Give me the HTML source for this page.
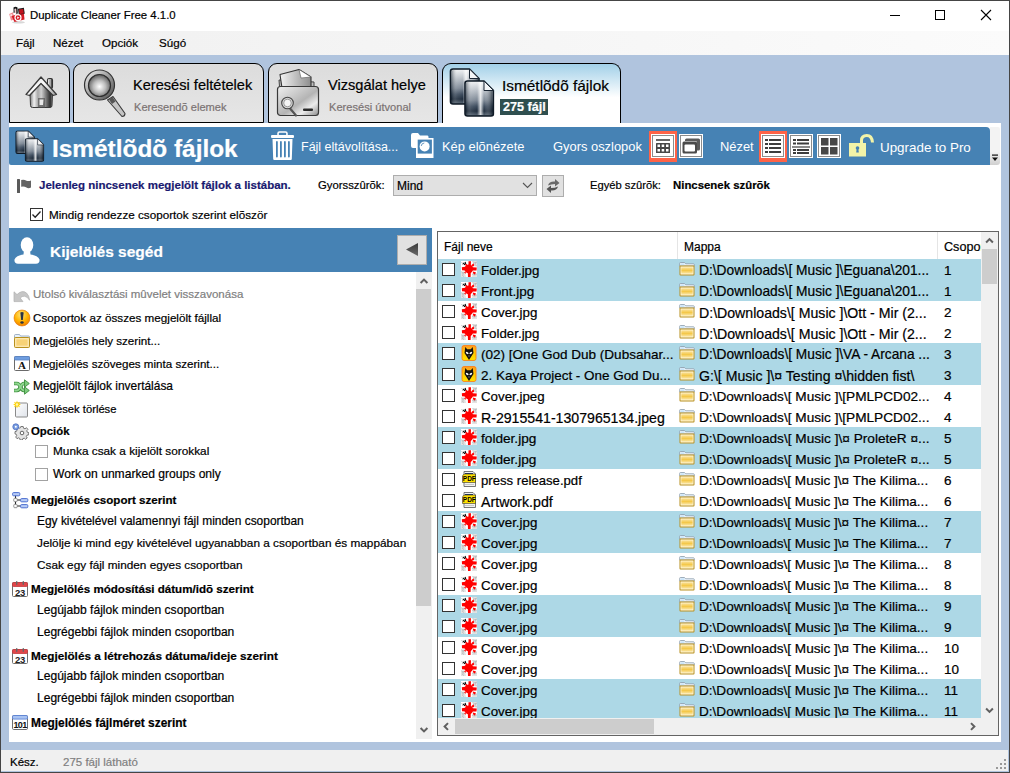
<!DOCTYPE html>
<html><head><meta charset="utf-8">
<style>
*{box-sizing:border-box;margin:0;padding:0}
.t,.li,.row span,.lh{-webkit-text-stroke:0.2px currentColor}
html,body{width:1010px;height:773px;overflow:hidden;background:#b0c4de;font-family:"Liberation Sans",sans-serif;color:#000}
.a{position:absolute}
.t{position:absolute;white-space:nowrap;line-height:1}
#win{position:absolute;left:0;top:0;width:1010px;height:773px;border:1px solid #454545}
#title{position:absolute;left:1px;top:1px;width:1008px;height:30px;background:#fff}
#menu{position:absolute;left:1px;top:31px;width:1008px;height:24px;background:linear-gradient(to right,#f0f0f0,#fbfbfb)}
.tab{position:absolute;top:63px;height:60px;background:linear-gradient(#dcdcdc,#e6e6e6);border:1px solid #000;border-radius:9px 9px 0 0}
#panel{position:absolute;left:9px;top:123px;width:992px;height:619px;background:#fff}
#hdr{position:absolute;left:9px;top:127px;width:981px;height:38px;background:#4682b4;border-radius:1px 4px 0 2px}
#status{position:absolute;left:1px;top:750px;width:1007px;height:21px;background:#f0f0f0}
#lhdr{position:absolute;left:9px;top:228px;width:423px;height:44px;background:#4682b4}
.li{position:absolute;left:33px;font-size:11.7px;white-space:nowrap;line-height:1}
.lb{font-weight:bold;left:31px}
.ls{left:37px}
#list{position:absolute;left:437px;top:231px;width:562px;height:505px;border:1px solid #646464;background:#fff;overflow:hidden}
.row{position:absolute;left:0;width:543px;height:21px;font-size:13.5px;white-space:nowrap}
.row.h{background:#add8e6}
.cb{position:absolute;width:13px;height:13px;border:1px solid #333;background:#fff}
.row .cb{left:4px;top:4px}
.row span{position:absolute;top:5px;line-height:1}
.row .n{left:43px}
.row .p{left:261px}
.row .g{left:506px}
.row i{position:absolute}
.fo{left:241px;top:3px;width:16px;height:14px}
.row svg{position:absolute}
.icr,.icw,.icp{left:23px;top:2px;width:16px;height:16px}
.lh{position:absolute;top:9px;font-size:12px;line-height:1;white-space:nowrap}
.sep{position:absolute;top:0;width:1px;height:27px;background:#e5e5e5}
.sb{position:absolute;background:#f0f0f0}
.th{position:absolute;background:#cdcdcd}
</style></head><body>
<div id="win"></div>
<div id="title"></div>
<svg class="a" style="left:8px;top:6px" width="18" height="18" viewBox="0 0 18 18">
<ellipse cx="10.5" cy="16.3" rx="6.5" ry="1.3" fill="#d8d8d8"/>
<path d="M1.2 8 L5 6.3 L6.5 13.5 L3 14.5 Z" fill="#f08a90"/>
<path d="M2 8.7 L4 8 L4.6 10 L2.6 10.6 Z" fill="#fff" opacity=".8"/>
<path d="M3.5 10 L15.8 6.5 L16.5 13.5 L6.5 16 Z" fill="#d61c26"/>
<path d="M5.5 1.5 Q7.5 0 9.5 1.5 L9.8 7.5 L8.3 8 L8.2 3 Q7.3 2.2 6.5 3 L6.8 6.5 L5.6 6.9 Z" fill="#111"/>
<path d="M6.8 3.2 Q7.4 2.6 8 3.2 L8.1 7 L7 7.3 Z" fill="#f5c0c4"/>
<rect x="10.3" y="2.3" width="6" height="6" fill="#1a1a1a" transform="rotate(-8 13 5)"/>
<rect x="11.2" y="3.3" width="4.3" height="4.5" fill="#c0141d" transform="rotate(-8 13 5)"/>
<circle cx="10" cy="11.7" r="3" fill="none" stroke="#fff" stroke-width="1.2"/>
<path d="M9.2 10.4 L11.6 11.8 L9.2 13 Z" fill="#fff"/>
</svg>
<svg class="a" style="left:880px;top:0" width="130" height="31" viewBox="0 0 130 31">
<rect x="10" y="15" width="10" height="1" fill="#000"/>
<rect x="55.5" y="10.5" width="9" height="9" fill="none" stroke="#000" stroke-width="1"/>
<path d="M101 10 L111 20 M111 10 L101 20" stroke="#000" stroke-width="1.1"/>
</svg>
<div class="t" style="left:30px;top:10px;font-size:11.4px">Duplicate Cleaner Free 4.1.0</div>
<div id="menu"></div>
<div class="t" style="left:16px;top:37px;font-size:11.6px">Fájl</div>
<div class="t" style="left:53px;top:37px;font-size:11.6px">Nézet</div>
<div class="t" style="left:102px;top:37px;font-size:11.6px">Opciók</div>
<div class="t" style="left:159px;top:37px;font-size:11.6px">Súgó</div>

<div class="tab" style="left:9px;width:61px"></div>
<svg class="a" style="left:20px;top:68px" width="42" height="44" viewBox="0 0 42 44">
<defs>
<linearGradient id="mh" x1="0" x2="1" y1="0" y2="0"><stop offset="0" stop-color="#7a7a7a"/><stop offset=".18" stop-color="#f0f0f0"/><stop offset=".35" stop-color="#a8a8a8"/><stop offset=".5" stop-color="#d0d0d0"/><stop offset=".75" stop-color="#6a6a6a"/><stop offset=".9" stop-color="#2e2e2e"/><stop offset="1" stop-color="#8a8a8a"/></linearGradient>
<linearGradient id="mr" x1="0" x2="1" y1="0" y2="1"><stop offset="0" stop-color="#cfcfcf"/><stop offset=".45" stop-color="#fbfbfb"/><stop offset="1" stop-color="#a5a5a5"/></linearGradient>
</defs>
<rect x="27.5" y="10.5" width="5" height="10" rx="1.5" fill="url(#mh)" stroke="#333" stroke-width="1.1"/>
<path d="M10 26 L21 15 L32.5 26 L32 37.5 Q32 39.5 30 39.5 L12.5 39.5 Q10.5 39.5 10.5 37.5 Z" fill="url(#mh)" stroke="#3a3a3a" stroke-width="1"/>
<path d="M6 26.5 L21 9 L36.5 26.5 L33 27.5 L21 15.5 L9.5 27.5 Z" fill="url(#mr)" stroke="#3a3a3a" stroke-width="1.3" stroke-linejoin="round"/>
<path d="M18 30 L25 30 L25 39.5 L18 39.5 Z" fill="#5a5a5a" opacity=".75"/>
<path d="M19.5 31.5 L23.5 31.5 L23 37 L19.5 37 Z" fill="#e8e8e8"/>
</svg>
<div class="tab" style="left:73px;width:191px"></div>
<svg class="a" style="left:82px;top:67px" width="45" height="52" viewBox="0 0 45 52">
<defs>
<radialGradient id="lens" cx=".5" cy=".55" r=".55"><stop offset="0" stop-color="#ffffff"/><stop offset=".5" stop-color="#bdbdbd"/><stop offset="1" stop-color="#5a5a5a"/></radialGradient>
<linearGradient id="ring" x1="0" y1="0" x2="1" y2="1"><stop offset="0" stop-color="#f5f5f5"/><stop offset=".5" stop-color="#9d9d9d"/><stop offset="1" stop-color="#4a4a4a"/></linearGradient>
<linearGradient id="hdl" x1="0" y1="0" x2="1" y2="0"><stop offset="0" stop-color="#5a5a5a"/><stop offset=".5" stop-color="#e8e8e8"/><stop offset="1" stop-color="#4a4a4a"/></linearGradient>
</defs>
<path d="M25.5 33 L31 29.5 L43 46.5 Q43 49.5 40 49.5 Z" fill="#c4c4c4" stroke="#3a3a3a" stroke-width="1.1" stroke-linejoin="round"/>
<path d="M27 32.5 L30.5 30 L33.5 34.5 L30 37 Z" fill="#555"/>
<circle cx="17.5" cy="18" r="15" fill="url(#ring)" stroke="#333" stroke-width="1.2"/>
<circle cx="17.5" cy="18.5" r="11" fill="url(#lens)" stroke="#2e2e2e" stroke-width="1.2"/>
</svg>

<div class="t" style="left:133px;top:78px;font-size:14.6px">Keresési feltételek</div>
<div class="t" style="left:134px;top:102px;font-size:11.1px;color:#7b7373">Keresendõ elemek</div>
<div class="tab" style="left:268px;width:170px"></div>
<svg class="a" style="left:276px;top:68px" width="44" height="50" viewBox="0 0 44 50">
<defs>
<linearGradient id="fb" x1="0" y1="0" x2="1" y2="1"><stop offset="0" stop-color="#f0f0f0"/><stop offset=".55" stop-color="#b4b4b4"/><stop offset=".75" stop-color="#ececec"/><stop offset="1" stop-color="#8a8a8a"/></linearGradient>
<linearGradient id="pp" x1="0" y1="0" x2="1" y2="0"><stop offset="0" stop-color="#f4f4f4"/><stop offset="1" stop-color="#8d8d8d"/></linearGradient>
</defs>
<path d="M3 12 L4 25 L38 25 L38 14 Z" fill="#bdbdbd" stroke="#444" stroke-width="1"/>
<path d="M4 6.5 L23 1.5 L35 9 L35 20 L6 20 Z" fill="url(#pp)" stroke="#333" stroke-width="1.1" stroke-linejoin="round"/>
<path d="M23 1.5 L25 10 L35 9 Z" fill="#fff" stroke="#555" stroke-width=".6"/>
<rect x="1.5" y="18.5" width="41" height="29" rx="3" fill="url(#fb)" stroke="#3a3a3a" stroke-width="1.2"/>
<rect x="27" y="40.5" width="10" height="2.5" rx="1" fill="#2a2a2a"/>
<path d="M14.5 41 L20 47.5" stroke="#555" stroke-width="2.2" stroke-linecap="round"/>
<circle cx="11.5" cy="35" r="5.8" fill="#d8d8d8" stroke="#444" stroke-width="1.1"/>
<circle cx="11.5" cy="35" r="3.8" fill="#f4f4f4" stroke="#777" stroke-width=".7"/>
</svg>

<div class="t" style="left:328px;top:78px;font-size:14.6px">Vizsgálat helye</div>
<div class="t" style="left:329px;top:102px;font-size:11.1px;color:#7b7373">Keresési útvonal</div>
<div class="tab" style="left:442px;width:179px;height:64px;border-bottom:none;background:linear-gradient(#a2d0e8,#ffffff 53%)"></div>
<svg width="0" height="0" style="position:absolute">
<defs>
<linearGradient id="dg" x1="0" y1="0" x2="0" y2="1"><stop offset="0" stop-color="#f2f3f5"/><stop offset=".2" stop-color="#c9ced4"/><stop offset=".55" stop-color="#7d8895"/><stop offset=".72" stop-color="#3d4c5e"/><stop offset=".86" stop-color="#1f2d3d"/><stop offset="1" stop-color="#5d6a78"/></linearGradient>
<linearGradient id="dh" x1="0" y1="0" x2="1" y2="0"><stop offset="0" stop-color="#0a1520" stop-opacity=".45"/><stop offset=".2" stop-color="#fff" stop-opacity=".1"/><stop offset=".42" stop-color="#fff" stop-opacity="0"/><stop offset=".55" stop-color="#fff" stop-opacity=".8"/><stop offset=".68" stop-color="#fff" stop-opacity="0"/><stop offset="1" stop-color="#0a1520" stop-opacity=".6"/></linearGradient>
<symbol id="doc" viewBox="0 0 31 37">
<path d="M1.5 3.5 Q1.5 1 4 1 L20.5 1 L30 10.5 L30 33.5 Q30 36 27.5 36 L4 36 Q1.5 36 1.5 33.5 Z" fill="url(#dg)" stroke="#0f1a26" stroke-width="1.6" stroke-linejoin="round"/>
<path d="M2.5 3.5 Q2.5 2 4 2 L20 2 L29 11 L29 33.5 Q29 35 27.5 35 L4 35 Q2.5 35 2.5 33.5 Z" fill="url(#dh)"/>
<path d="M20.5 1 L20.5 10.5 L30 10.5 Z" fill="#f4f5f7" stroke="#1a2533" stroke-width="1"/>
</symbol>
</defs></svg>
<svg class="a" style="left:449px;top:68px" width="48" height="50" viewBox="0 0 48 50">
<use href="#doc" x="0" y="0" width="31" height="37"/>
<use href="#doc" x="14.5" y="12" width="31" height="37"/>
</svg>
<div class="t" style="left:502px;top:78px;font-size:15.4px">Ismétlõdõ fájlok</div>
<div class="a" style="left:500px;top:99px;width:48px;height:16px;background:#2f4f4f"></div>
<div class="t" style="left:503px;top:101px;font-size:12.6px;font-weight:bold;color:#fff">275 fájl</div>

<div id="panel"></div>
<div id="hdr"></div>
<svg class="a" style="left:15px;top:130px" width="31" height="33" viewBox="0 0 48 50">
<use href="#doc" x="0" y="0" width="31" height="37"/>
<use href="#doc" x="14.5" y="12" width="31" height="37"/>
</svg>
<svg class="a" style="left:270px;top:131px" width="25" height="30" viewBox="0 0 25 30">
<rect x="8" y="1" width="9" height="4" rx="1.5" fill="none" stroke="#fff" stroke-width="1.6"/>
<rect x="1" y="4" width="23" height="3" rx="1" fill="#fff"/>
<path d="M2.5 8 L22.5 8 L21.8 28 Q21.8 29 20.8 29 L4.2 29 Q3.2 29 3.2 28 Z" fill="#fff"/>
<rect x="6" y="10" width="1.8" height="16.5" rx=".9" fill="#4682b4"/>
<rect x="10" y="10" width="1.8" height="16.5" rx=".9" fill="#4682b4"/>
<rect x="14" y="10" width="1.8" height="16.5" rx=".9" fill="#4682b4"/>
<rect x="18" y="10" width="1.8" height="16.5" rx=".9" fill="#4682b4"/>
</svg>
<svg class="a" style="left:410px;top:132px" width="25" height="28" viewBox="0 0 25 28">
<path d="M1 3 Q1 1 3 1 L8 1 L10 3.5 L17.5 3.5 Q18.5 3.5 18.5 5 L18.5 6 L6 6 L6 16 L3 16 Q1 16 1 14 Z" fill="#fff"/>
<rect x="6" y="6" width="17.5" height="20" fill="#fff"/>
<rect x="7.7" y="7.6" width="14.2" height="14" fill="#4682b4"/>
<circle cx="14.6" cy="14.4" r="5" fill="#fff"/>
<path d="M11.2 14 Q11.5 11.2 14.3 11" fill="none" stroke="#4682b4" stroke-width=".8"/>
</svg>
<div class="t" style="left:52px;top:137px;font-size:24.4px;font-weight:bold;color:#fff">Ismétlõdõ fájlok</div>
<div class="t" style="left:301px;top:141px;font-size:12.5px;color:#fff;-webkit-text-stroke:0">Fájl eltávolítása...</div>
<div class="t" style="left:442px;top:141px;font-size:12.9px;color:#fff;-webkit-text-stroke:0">Kép elõnézete</div>
<div class="t" style="left:553px;top:141px;font-size:12.9px;color:#fff;-webkit-text-stroke:0">Gyors oszlopok</div>
<div class="t" style="left:720px;top:141px;font-size:12.9px;color:#fff;-webkit-text-stroke:0">Nézet</div>
<div class="a" style="left:649px;top:131px;width:28px;height:31px;background:#ff6347"></div>
<div class="a" style="left:651px;top:134px;width:24px;height:24px;background:#fff"></div>
<div class="a" style="left:652px;top:135px;width:22px;height:22px;border:1px solid #8c8c8c"></div>
<svg class="a" style="left:651px;top:134px" width="24" height="24" viewBox="0 0 24 24">
<rect x="5" y="5" width="14" height="2" fill="#666"/>
<rect x="5" y="9" width="14" height="10" rx=".5" fill="#474747"/>
<rect x="6.5" y="10.5" width="2.5" height="2.5" fill="#fff"/><rect x="10.7" y="10.5" width="2.5" height="2.5" fill="#fff"/><rect x="15" y="10.5" width="2.5" height="2.5" fill="#fff"/>
<rect x="6.5" y="15" width="2.5" height="2.5" fill="#fff"/><rect x="10.7" y="15" width="2.5" height="2.5" fill="#fff"/><rect x="15" y="15" width="2.5" height="2.5" fill="#fff"/>
</svg>
<div class="a" style="left:679px;top:134px;width:24px;height:24px;background:#fff"></div>
<div class="a" style="left:680px;top:135px;width:22px;height:22px;border:1px solid #8c8c8c"></div>
<svg class="a" style="left:679px;top:134px" width="24" height="24" viewBox="0 0 24 24">
<rect x="6" y="4.5" width="15" height="12" rx="1.5" fill="#5a5a5a"/>
<rect x="3" y="7" width="15" height="12.5" rx="1.5" fill="#fff"/>
<rect x="3.5" y="7.5" width="14.5" height="12" rx="1.5" fill="#4a4a4a"/>
<rect x="5.5" y="10.5" width="10.5" height="7" rx="1" fill="#fff"/>
</svg>
<div class="a" style="left:759px;top:131px;width:28px;height:31px;background:#ff6347"></div>
<div class="a" style="left:761px;top:134px;width:24px;height:24px;background:#fff"></div>
<div class="a" style="left:762px;top:135px;width:22px;height:22px;border:1px solid #8c8c8c"></div>
<svg class="a" style="left:761px;top:134px" width="24" height="24" viewBox="0 0 24 24" fill="#3d3d3d">
<rect x="4" y="5" width="3" height="2"/><rect x="8" y="5" width="12" height="2"/>
<rect x="4" y="9" width="3" height="2"/><rect x="8" y="9" width="12" height="2"/>
<rect x="4" y="13" width="3" height="2"/><rect x="8" y="13" width="12" height="2"/>
<rect x="4" y="17" width="3" height="2"/><rect x="8" y="17" width="12" height="2"/>
</svg>
<div class="a" style="left:789px;top:134px;width:24px;height:24px;background:#fff"></div>
<div class="a" style="left:790px;top:135px;width:22px;height:22px;border:1px solid #8c8c8c"></div>
<svg class="a" style="left:789px;top:134px" width="24" height="24" viewBox="0 0 24 24" fill="#3d3d3d">
<rect x="4" y="5" width="3" height="2"/><rect x="8" y="5" width="12" height="2"/>
<rect x="4" y="8.5" width="3" height="2"/><rect x="8" y="8.5" width="12" height="2"/>
<rect x="3" y="12" width="18" height="2" fill="#8a8a8a"/>
<rect x="4" y="15" width="3" height="2"/><rect x="8" y="15" width="12" height="2"/>
<rect x="4" y="18" width="3" height="2"/><rect x="8" y="18" width="12" height="2"/>
</svg>
<div class="a" style="left:817px;top:134px;width:24px;height:24px;background:#fff"></div>
<div class="a" style="left:818px;top:135px;width:22px;height:22px;border:1px solid #8c8c8c"></div>
<svg class="a" style="left:817px;top:134px" width="24" height="24" viewBox="0 0 24 24" fill="#474747">
<rect x="4" y="4" width="7.5" height="7.5"/><rect x="13" y="4" width="7.5" height="7.5"/>
<rect x="4" y="13" width="7.5" height="7.5"/><rect x="13" y="13" width="7.5" height="7.5"/>
</svg>
<svg class="a" style="left:848px;top:133px" width="28" height="25" viewBox="0 0 28 25">
<path d="M13.5 10 L13.5 7.5 Q13.5 2.5 18.8 2.5 Q24 2.5 24.5 9.5" fill="none" stroke="#f3f3a8" stroke-width="3"/>
<rect x="1" y="10" width="17" height="13.5" fill="#f3f3a8"/>
<circle cx="9.5" cy="15" r="1.8" fill="#4682b4"/>
<path d="M8.7 15.5 L10.3 15.5 L10.8 19.5 L8.2 19.5 Z" fill="#4682b4"/>
</svg>
<div class="a" style="left:990px;top:127px;width:10px;height:38px;background:linear-gradient(#f3f3f3 65%,#d0d0d0);border-radius:0 2px 3px 0"></div>
<svg class="a" style="left:990px;top:153px" width="10" height="10" viewBox="0 0 10 10">
<rect x="2" y="1.5" width="6" height="1.2" fill="#111"/>
<path d="M2 4.5 L8 4.5 L5 8 Z" fill="#111"/>
</svg>
<div class="t" style="left:880px;top:141px;font-size:13.4px;color:#fff;-webkit-text-stroke:0">Upgrade to Pro</div>

<svg class="a" style="left:17px;top:179px" width="15" height="15" viewBox="0 0 15 15">
<rect x="0" y="0" width="3" height="14" rx=".6" fill="#5a5a5a"/>
<path d="M4.2 1 Q7 0 9.5 1.8 Q11.5 2.5 14 1.6 L14 8.5 Q11.5 9.8 9.5 8.6 Q7 7 4.2 7.8 Z" fill="#636363"/>
</svg>
<div class="a" style="left:393px;top:175px;width:144px;height:21px;background:#e1e1e1;border:1px solid #adadad"></div>
<div class="t" style="left:397px;top:180px;font-size:12px">Mind</div>
<svg class="a" style="left:522px;top:182px" width="11" height="7" viewBox="0 0 11 7"><path d="M1 1 L5.5 5.5 L10 1" fill="none" stroke="#555" stroke-width="1.1"/></svg>
<div class="a" style="left:542px;top:175px;width:22px;height:22px;background:#e1e1e1;border:1px solid #adadad"></div>
<svg class="a" style="left:544px;top:178px" width="18" height="16" viewBox="0 0 18 16">
<path d="M4 7.5 Q5 3.5 10 3.5 L11 3.5 L11 1 L15.5 5 L11 8.5 L11 6 Q7 6 4 7.5 Z" fill="#6a6a6a"/>
<path d="M14 8.5 Q13 12.5 8 12.5 L7 12.5 L7 15 L2.5 11 L7 7.5 L7 10 Q11 10 14 8.5 Z" fill="#555"/>
</svg>
<div class="t" style="left:39px;top:180px;font-size:11.5px;font-weight:bold;color:#191970">Jelenleg nincsenek megjelölt fájlok a listában.</div>
<div class="t" style="left:318px;top:180px;font-size:11.3px">Gyorsszûrõk:</div>
<div class="t" style="left:590px;top:180px;font-size:11.2px">Egyéb szûrõk:</div>
<div class="t" style="left:673px;top:180px;font-size:11.4px;font-weight:bold">Nincsenek szûrõk</div>
<div class="cb" style="left:30px;top:208px"></div>
<svg class="a" style="left:30px;top:208px" width="13" height="13" viewBox="0 0 13 13"><path d="M2.5 6.5 L5.2 9.3 L10.5 3.5" fill="none" stroke="#222" stroke-width="1.3"/></svg>
<div class="t" style="left:49px;top:209px;font-size:11.7px">Mindig rendezze csoportok szerint elõször</div>

<div id="lhdr"></div>
<svg class="a" style="left:13px;top:236px" width="28" height="29" viewBox="0 0 28 29">
<ellipse cx="14" cy="9" rx="6.3" ry="7.8" fill="#fff"/>
<path d="M11 14 L17 14 L17.5 18.5 Q25 19.5 26.5 23.5 Q27 27.5 23 27.8 L5 27.8 Q1 27.5 1.5 23.5 Q3 19.5 10.5 18.5 Z" fill="#fff"/>
</svg>
<div class="a" style="left:397px;top:235px;width:30px;height:30px;background:#e1e1e1;border:1px solid #adadad"></div>
<svg class="a" style="left:405px;top:242px" width="14" height="15" viewBox="0 0 14 15"><defs><linearGradient id="tri" x1="0" x2="0" y1="0" y2="1"><stop offset="0" stop-color="#3a3a3a"/><stop offset="1" stop-color="#6a6a6a"/></linearGradient></defs><path d="M1 7.5 L13 1 L13 14 Z" fill="url(#tri)"/></svg>
<div class="t" style="left:50px;top:244px;font-size:15.5px;font-weight:bold;color:#fff">Kijelölés segéd</div>

<div class="li" style="top:289px;color:#808080;font-size:11.51px">Utolsó kiválasztási mûvelet visszavonása</div>
<div class="li" style="top:312px;font-size:11.68px">Csoportok az összes megjelölt fájllal</div>
<div class="li" style="top:335px;font-size:11.61px">Megjelölés hely szerint...</div>
<div class="li" style="top:358px;font-size:11.60px">Megjelölés szöveges minta szerint...</div>
<div class="li" style="top:381px;font-size:11.95px">Megjelölt fájlok invertálása</div>
<div class="li" style="top:404px;font-size:11.21px">Jelölések törlése</div>
<div class="li lb" style="top:426px;font-size:11.36px">Opciók</div>
<svg class="a" style="left:13px;top:290px" width="18" height="13" viewBox="0 0 18 13">
<path d="M1 1.8 L4 4.6 Q9 -0.5 13.5 3 Q16.2 5.5 16.6 10.3 Q14.5 6.6 11.5 6.2 Q9 6 7.2 8 L10 11.6 L1 11.6 Z" fill="#c6c6c6" stroke="#b0b0b0" stroke-width=".7" stroke-linejoin="round"/>
</svg>
<svg class="a" style="left:13px;top:309px" width="18" height="18" viewBox="0 0 18 18">
<defs><radialGradient id="wg" cx=".45" cy=".3" r=".75"><stop offset="0" stop-color="#ffe680"/><stop offset=".55" stop-color="#ffb300"/><stop offset="1" stop-color="#f07800"/></radialGradient></defs>
<circle cx="9" cy="9" r="8" fill="url(#wg)" stroke="#e07000" stroke-width=".6"/>
<path d="M7.3 3.5 Q9 2.6 10.7 3.5 L9.8 11 L8.2 11 Z" fill="#2a3344"/>
<ellipse cx="9" cy="13.5" rx="1.7" ry="1.3" fill="#2a3344"/>
</svg>
<svg class="a" style="left:14px;top:334px" width="16" height="14" viewBox="0 0 16 14">
<path d="M0.5 1.5 Q0.5 0.5 1.5 0.5 L5.5 0.5 L6.5 2 L14.5 2 Q15.5 2 15.5 3 L15.5 4 L0.5 4 Z" fill="#e8f2fb" stroke="#8aa0b8" stroke-width=".8"/>
<rect x="0.5" y="3.5" width="15" height="10" rx="1" fill="#f7d277" stroke="#b8901e" stroke-width="1"/>
<rect x="1.8" y="4.8" width="12.4" height="7.4" fill="none" stroke="#fff3d0" stroke-width=".9"/>
</svg>
<svg class="a" style="left:14px;top:356px" width="16" height="15" viewBox="0 0 16 15">
<rect x="0.5" y="0.5" width="15" height="14" rx="1" fill="#fff" stroke="#6a6a6a" stroke-width="1"/>
<rect x="0.5" y="0.5" width="15" height="3.5" rx="1" fill="#6e9de0" stroke="#5a86c8" stroke-width=".8"/>
<text x="8" y="13.3" text-anchor="middle" font-family="Liberation Serif" font-weight="bold" font-size="11" fill="#111">A</text>
</svg>
<svg class="a" style="left:13px;top:379px" width="17" height="16" viewBox="0 0 17 16">
<g fill="none" stroke-linecap="butt">
<path d="M1 4.5 L4 4.5 Q6 4.5 7.5 8 Q9 11.5 11 11.5 L12 11.5" stroke="#3f8f3f" stroke-width="3.6"/>
<path d="M1 11.5 L4 11.5 Q6 11.5 7.5 8 Q9 4.5 11 4.5 L12 4.5" stroke="#3f8f3f" stroke-width="3.6"/>
<path d="M1.3 4.5 L4 4.5 Q6 4.5 7.5 8 Q9 11.5 11 11.5 L12.5 11.5" stroke="#8fd88f" stroke-width="1.8"/>
<path d="M1.3 11.5 L4 11.5 Q6 11.5 7.5 8 Q9 4.5 11 4.5 L12.5 4.5" stroke="#8fd88f" stroke-width="1.8"/>
</g>
<path d="M11.5 0.8 L16.3 4.5 L11.5 8.2 Z" fill="#7ccc7c" stroke="#3f8f3f" stroke-width=".9" stroke-linejoin="round"/>
<path d="M11.5 7.8 L16.3 11.5 L11.5 15.2 Z" fill="#7ccc7c" stroke="#3f8f3f" stroke-width=".9" stroke-linejoin="round"/>
</svg>
<svg class="a" style="left:13px;top:400px" width="16" height="18" viewBox="0 0 16 17">
<defs><linearGradient id="nd" x1="0" y1="0" x2="1" y2="1"><stop offset="0" stop-color="#fff"/><stop offset="1" stop-color="#dfe3ea"/></linearGradient></defs>
<rect x="2.5" y="2.5" width="12" height="14" rx="1" fill="url(#nd)" stroke="#8a8a8a" stroke-width="1"/>
<path d="M3 0 L3.8 2.2 L6 1.2 L5 3.3 L7 4 L5 4.7 L6 6.8 L3.8 5.8 L3 8 L2.2 5.8 L0 6.8 L1 4.7 L-1 4 L1 3.3 L0 1.2 L2.2 2.2 Z" fill="#ffd200" transform="translate(1 0)"/>
<circle cx="4" cy="4" r="1.3" fill="#fff7b0"/>
</svg>
<svg class="a" style="left:12px;top:423px" width="17" height="17" viewBox="0 0 17 17">
<g transform="translate(10 10)"><path d="M-1.2 -6.5 L1.2 -6.5 L1.5 -4.8 L3 -4.2 L4.5 -5.3 L5.9 -3.6 L4.8 -2.3 L5.2 -0.8 L6.8 -0.4 L6.6 1.9 L5 2.1 L4.3 3.5 L5.2 5 L3.5 6.3 L2.3 5.2 L0.8 5.6 L0.4 7 L-1.9 7 L-2.2 5.5 L-3.6 4.8 L-5 5.7 L-6.3 4 L-5.3 2.7 L-5.8 1.2 L-7 0.9 L-7 -1.4 L-5.5 -1.7 L-4.9 -3.2 L-5.8 -4.6 L-4.1 -5.9 L-2.8 -4.9 L-1.5 -5.3 Z" fill="#e4e4e4" stroke="#6a6a6a" stroke-width=".9"/><circle r="1.8" fill="#fff" stroke="#555" stroke-width=".9"/></g>
<g transform="translate(3.8 3.8)"><circle r="3" fill="#7a9ee0" stroke="#4a6cc0" stroke-width=".8"/><circle r="1" fill="#fff"/></g>
</svg>
<div class="cb" style="left:35px;top:445px;border-color:#a2a2a2"></div>
<div class="li" style="left:53px;top:446px;font-size:11.82px">Munka csak a kijelölt sorokkal</div>
<div class="cb" style="left:35px;top:468px;border-color:#a2a2a2"></div>
<div class="li" style="left:53px;top:468px;font-size:12.10px">Work on unmarked groups only</div>
<svg class="a" style="left:12px;top:492px" width="17" height="17" viewBox="0 0 17 17">
<line x1="3.5" y1="3" x2="3.5" y2="14" stroke="#222" stroke-width="1"/>
<line x1="5" y1="8" x2="9" y2="8" stroke="#222" stroke-width="1"/><line x1="5" y1="14" x2="9" y2="14" stroke="#222" stroke-width="1"/>
<rect x="1.8" y="6.3" width="3.4" height="3.4" rx=".8" fill="#fff" stroke="#777" stroke-width=".8"/>
<rect x="1.8" y="12.3" width="3.4" height="3.4" rx=".8" fill="#fff" stroke="#777" stroke-width=".8"/>
<rect x="0.6" y="0.6" width="7.2" height="3.2" rx="1" fill="#b8ccf5" stroke="#4d6fd0" stroke-width="1"/>
<rect x="8.6" y="6.6" width="7.2" height="3.2" rx="1" fill="#b8ccf5" stroke="#4d6fd0" stroke-width="1"/>
<rect x="8.6" y="12.6" width="7.2" height="3.2" rx="1" fill="#b8ccf5" stroke="#4d6fd0" stroke-width="1"/>
</svg>
<div class="li lb" style="top:495px;font-size:11.59px">Megjelölés csoport szerint</div>
<div class="li ls" style="top:516px;font-size:11.94px">Egy kivételével valamennyi fájl minden csoportban</div>
<div class="li ls" style="top:538px;font-size:11.81px">Jelölje ki mind egy kivételével ugyanabban a csoportban és mappában</div>
<div class="li ls" style="top:559px;font-size:11.79px">Csak egy fájl minden egyes csoportban</div>
<svg class="a" style="left:12px;top:581px" width="16" height="16" viewBox="0 0 16 16">
<rect x="0.5" y="1.5" width="15" height="14" rx="1" fill="#fff" stroke="#6f6f6f" stroke-width="1"/>
<rect x="0.5" y="1.5" width="15" height="4" rx="1" fill="#e0474a" stroke="#c43a3d" stroke-width=".8"/>
<rect x="4" y="0" width="1.4" height="4" rx=".7" fill="#666"/><rect x="10.6" y="0" width="1.4" height="4" rx=".7" fill="#666"/>
<text x="8" y="14.6" text-anchor="middle" font-family="Liberation Sans" font-weight="bold" font-size="9.5" letter-spacing="-.3" fill="#222">23</text>
</svg>
<div class="li lb" style="top:584px;font-size:11.59px">Megjelölés módosítási dátum/idõ szerint</div>
<div class="li ls" style="top:604px;font-size:12.09px">Legújabb fájlok minden csoportban</div>
<div class="li ls" style="top:626px;font-size:12.04px">Legrégebbi fájlok minden csoportban</div>
<svg class="a" style="left:12px;top:648px" width="16" height="16" viewBox="0 0 16 16">
<rect x="0.5" y="1.5" width="15" height="14" rx="1" fill="#fff" stroke="#6f6f6f" stroke-width="1"/>
<rect x="0.5" y="1.5" width="15" height="4" rx="1" fill="#e0474a" stroke="#c43a3d" stroke-width=".8"/>
<rect x="4" y="0" width="1.4" height="4" rx=".7" fill="#666"/><rect x="10.6" y="0" width="1.4" height="4" rx=".7" fill="#666"/>
<text x="8" y="14.6" text-anchor="middle" font-family="Liberation Sans" font-weight="bold" font-size="9.5" letter-spacing="-.3" fill="#222">23</text>
</svg>
<div class="li lb" style="top:650px;font-size:11.73px">Megjelölés a létrehozás dátuma/ideje szerint</div>
<div class="li ls" style="top:670px;font-size:12.09px">Legújabb fájlok minden csoportban</div>
<div class="li ls" style="top:692px;font-size:12.04px">Legrégebbi fájlok minden csoportban</div>
<svg class="a" style="left:12px;top:715px" width="16" height="15" viewBox="0 0 16 15">
<rect x="0.5" y="0.5" width="15" height="14" rx="1.2" fill="#fff" stroke="#6f6f6f" stroke-width="1"/>
<rect x="0.5" y="0.5" width="15" height="3.6" rx="1.2" fill="#a9c3f2" stroke="#5d84d8" stroke-width=".9"/>
<text x="8" y="13" text-anchor="middle" font-family="Liberation Sans" font-weight="bold" font-size="9" letter-spacing="-.6" fill="#111">101</text>
</svg>
<div class="li lb" style="top:718px;font-size:11.92px">Megjelölés fájlméret szerint</div>

<svg width="0" height="0" style="position:absolute">
<defs>
<symbol id="splat" viewBox="0 0 16 16">
<rect width="16" height="16" fill="#fff"/>
<path d="M11 0 L16 0 L16 6 L13 5 L12 2 Z M0 10 L4 11 L5 16 L0 16 Z M12 11 L16 12 L16 16 L11 16 Z" fill="#e2e2e2"/>
<path d="M0.5 1 L2 3 L1 4 M12 0.5 L13.5 2 L15.5 1 L14 3.5 L15.5 5 M0.5 11 L2.5 12.5 L1.5 14.5 L3 15.5 M11 13 L13 14 L15.5 13.5 M1 12.5 L3 11" stroke="#b5b5b5" stroke-width=".8" fill="none"/>
<circle cx="7.8" cy="7.8" r="4.4" fill="#f00"/>
<path d="M7.5 0.3 L10 0.3 L9.8 4.5 L7.5 4.5 Z" fill="#f00"/>
<path d="M0.8 6.2 L4.5 5.8 L4.5 9.5 L1 9.2 Z" fill="#f00"/>
<path d="M11.5 6.3 L15.8 6.5 L15.5 9.5 L11.5 9.5 Z" fill="#f00"/>
<path d="M6.8 11 L9.8 11 L9.6 16 L7 16 Z" fill="#f00"/>
<path d="M10.3 4.3 L12.5 2.3 L13.2 4.5 L11.8 5.8 Z" fill="#f00"/>
<path d="M12.3 10.5 L15 11.5 L13.8 13.8 L11.8 12 Z" fill="#f00"/>
<path d="M3.5 3.5 L6 3 L6 5.5 Z" fill="#f00"/>
<path d="M3 11 L5 10.5 L4.5 13 Z" fill="#f00"/>
<path d="M2.2 2 L4 3.8 M4 1 L4.8 3" stroke="#000" stroke-width="1.1"/>
</symbol>
<symbol id="wamp" viewBox="0 0 16 16">
<defs><linearGradient id="wa" x1="0" y1="0" x2="0" y2="1"><stop offset="0" stop-color="#ff9a20"/><stop offset=".5" stop-color="#ffcc00"/><stop offset="1" stop-color="#ffe000"/></linearGradient></defs>
<rect x="1" y="0.5" width="14" height="15" rx="2" fill="url(#wa)" stroke="#ff7a10" stroke-width=".8"/>
<path d="M4.3 2 L6.2 4.3 L9.8 4.3 L11.7 2 L12.5 8 L8 15 L3.5 8 Z" fill="#111"/>
<ellipse cx="6.2" cy="8" rx="1.5" ry=".9" transform="rotate(30 6.2 8)" fill="#fff"/>
<ellipse cx="9.8" cy="8" rx="1.5" ry=".9" transform="rotate(-30 9.8 8)" fill="#fff"/>
<circle cx="8" cy="11" r=".7" fill="#888"/>
</symbol>
<symbol id="pdf" viewBox="0 0 16 16">
<path d="M3 0.5 L12 0.5 L14.5 3 L14.5 15.5 L3 15.5 Z" fill="#f2f2f2" stroke="#666" stroke-width=".9"/>
<path d="M1.5 5 Q2 3 4 3 L14.5 3 L14.5 11.5 L1.5 11.5 Z" fill="#ffe000" stroke="#333" stroke-width=".6"/>
<rect x="4" y="2" width="8" height="1" fill="#235"/>
<text x="8.3" y="10.3" text-anchor="middle" font-family="Liberation Sans" font-weight="bold" font-size="6.5" fill="#000">PDF</text>
<rect x="4" y="13" width="9" height=".8" fill="#bbb"/>
</symbol>
<symbol id="fold" viewBox="0 0 16 14">
<path d="M0.7 1.3 Q0.7 0.5 1.5 0.5 L5.5 0.5 L6.5 1.8 L14.5 1.8 Q15.3 1.8 15.3 2.6 L15.3 4 L0.7 4 Z" fill="#f4f9ff" stroke="#8899aa" stroke-width=".8"/>
<rect x="1.5" y="1.3" width="4" height="2" fill="#c8e4fa"/>
<rect x="0.5" y="3.5" width="15" height="10" rx="1" fill="#b8901e"/>
<rect x="1.5" y="4.5" width="13" height="8" fill="#fff8e0"/>
<defs><linearGradient id="fy" x1="0" y1="0" x2="0" y2="1"><stop offset="0" stop-color="#fbe29a"/><stop offset=".5" stop-color="#f4c84a"/><stop offset="1" stop-color="#fbe7a8"/></linearGradient></defs>
<rect x="2.3" y="5.3" width="11.4" height="6.4" fill="url(#fy)"/>
</symbol>
</defs></svg>
<div id="list">
<div class="row h" style="top:27px"><i class="cb"></i><svg class="icr" viewBox="0 0 16 16"><use href="#splat"/></svg><span class="n" style="font-size:13.3px">Folder.jpg</span><svg class="fo" viewBox="0 0 16 14"><use href="#fold"/></svg><span class="p" style="font-size:13.75px">D:\Downloads\[ Music ]\Eguana\201...</span><span class="g">1</span></div>
<div class="row h" style="top:48px"><i class="cb"></i><svg class="icr" viewBox="0 0 16 16"><use href="#splat"/></svg><span class="n" style="font-size:13.53px">Front.jpg</span><svg class="fo" viewBox="0 0 16 14"><use href="#fold"/></svg><span class="p" style="font-size:13.75px">D:\Downloads\[ Music ]\Eguana\201...</span><span class="g">1</span></div>
<div class="row" style="top:69px"><i class="cb"></i><svg class="icr" viewBox="0 0 16 16"><use href="#splat"/></svg><span class="n" style="font-size:13.35px">Cover.jpg</span><svg class="fo" viewBox="0 0 16 14"><use href="#fold"/></svg><span class="p" style="font-size:14.13px">D:\Downloads\[ Music ]\Ott - Mir (2...</span><span class="g">2</span></div>
<div class="row" style="top:90px"><i class="cb"></i><svg class="icr" viewBox="0 0 16 16"><use href="#splat"/></svg><span class="n" style="font-size:13.3px">Folder.jpg</span><svg class="fo" viewBox="0 0 16 14"><use href="#fold"/></svg><span class="p" style="font-size:14.13px">D:\Downloads\[ Music ]\Ott - Mir (2...</span><span class="g">2</span></div>
<div class="row h" style="top:111px"><i class="cb"></i><svg class="icw" viewBox="0 0 16 16"><use href="#wamp"/></svg><span class="n" style="font-size:13.54px">(02) [One God Dub (Dubsahar...</span><svg class="fo" viewBox="0 0 16 14"><use href="#fold"/></svg><span class="p" style="font-size:13.73px">D:\Downloads\[ Music ]\VA - Arcana ...</span><span class="g">3</span></div>
<div class="row h" style="top:132px"><i class="cb"></i><svg class="icw" viewBox="0 0 16 16"><use href="#wamp"/></svg><span class="n" style="font-size:13.44px">2. Kaya Project - One God Du...</span><svg class="fo" viewBox="0 0 16 14"><use href="#fold"/></svg><span class="p" style="font-size:14.12px">G:\[ Music ]\¤ Testing ¤\hidden fist\</span><span class="g">3</span></div>
<div class="row" style="top:153px"><i class="cb"></i><svg class="icr" viewBox="0 0 16 16"><use href="#splat"/></svg><span class="n" style="font-size:13.3px">Cover.jpeg</span><svg class="fo" viewBox="0 0 16 14"><use href="#fold"/></svg><span class="p" style="font-size:13.65px">D:\Downloads\[ Music ]\[PMLPCD02...</span><span class="g">4</span></div>
<div class="row" style="top:174px"><i class="cb"></i><svg class="icr" viewBox="0 0 16 16"><use href="#splat"/></svg><span class="n" style="font-size:14.13px">R-2915541-1307965134.jpeg</span><svg class="fo" viewBox="0 0 16 14"><use href="#fold"/></svg><span class="p" style="font-size:13.65px">D:\Downloads\[ Music ]\[PMLPCD02...</span><span class="g">4</span></div>
<div class="row h" style="top:195px"><i class="cb"></i><svg class="icr" viewBox="0 0 16 16"><use href="#splat"/></svg><span class="n" style="font-size:13.65px">folder.jpg</span><svg class="fo" viewBox="0 0 16 14"><use href="#fold"/></svg><span class="p" style="font-size:13.65px">D:\Downloads\[ Music ]\¤ ProleteR ¤...</span><span class="g">5</span></div>
<div class="row h" style="top:216px"><i class="cb"></i><svg class="icr" viewBox="0 0 16 16"><use href="#splat"/></svg><span class="n" style="font-size:13.65px">folder.jpg</span><svg class="fo" viewBox="0 0 16 14"><use href="#fold"/></svg><span class="p" style="font-size:13.65px">D:\Downloads\[ Music ]\¤ ProleteR ¤...</span><span class="g">5</span></div>
<div class="row" style="top:237px"><i class="cb"></i><svg class="icp" viewBox="0 0 16 16"><use href="#pdf"/></svg><span class="n" style="font-size:13.15px">press release.pdf</span><svg class="fo" viewBox="0 0 16 14"><use href="#fold"/></svg><span class="p" style="font-size:13.58px">D:\Downloads\[ Music ]\¤ The Kilima...</span><span class="g">6</span></div>
<div class="row" style="top:258px"><i class="cb"></i><svg class="icp" viewBox="0 0 16 16"><use href="#pdf"/></svg><span class="n" style="font-size:14.2px">Artwork.pdf</span><svg class="fo" viewBox="0 0 16 14"><use href="#fold"/></svg><span class="p" style="font-size:13.58px">D:\Downloads\[ Music ]\¤ The Kilima...</span><span class="g">6</span></div>
<div class="row h" style="top:279px"><i class="cb"></i><svg class="icr" viewBox="0 0 16 16"><use href="#splat"/></svg><span class="n" style="font-size:13.35px">Cover.jpg</span><svg class="fo" viewBox="0 0 16 14"><use href="#fold"/></svg><span class="p" style="font-size:13.58px">D:\Downloads\[ Music ]\¤ The Kilima...</span><span class="g">7</span></div>
<div class="row h" style="top:300px"><i class="cb"></i><svg class="icr" viewBox="0 0 16 16"><use href="#splat"/></svg><span class="n" style="font-size:13.35px">Cover.jpg</span><svg class="fo" viewBox="0 0 16 14"><use href="#fold"/></svg><span class="p" style="font-size:13.58px">D:\Downloads\[ Music ]\¤ The Kilima...</span><span class="g">7</span></div>
<div class="row" style="top:321px"><i class="cb"></i><svg class="icr" viewBox="0 0 16 16"><use href="#splat"/></svg><span class="n" style="font-size:13.35px">Cover.jpg</span><svg class="fo" viewBox="0 0 16 14"><use href="#fold"/></svg><span class="p" style="font-size:13.58px">D:\Downloads\[ Music ]\¤ The Kilima...</span><span class="g">8</span></div>
<div class="row" style="top:342px"><i class="cb"></i><svg class="icr" viewBox="0 0 16 16"><use href="#splat"/></svg><span class="n" style="font-size:13.35px">Cover.jpg</span><svg class="fo" viewBox="0 0 16 14"><use href="#fold"/></svg><span class="p" style="font-size:13.58px">D:\Downloads\[ Music ]\¤ The Kilima...</span><span class="g">8</span></div>
<div class="row h" style="top:363px"><i class="cb"></i><svg class="icr" viewBox="0 0 16 16"><use href="#splat"/></svg><span class="n" style="font-size:13.35px">Cover.jpg</span><svg class="fo" viewBox="0 0 16 14"><use href="#fold"/></svg><span class="p" style="font-size:13.58px">D:\Downloads\[ Music ]\¤ The Kilima...</span><span class="g">9</span></div>
<div class="row h" style="top:384px"><i class="cb"></i><svg class="icr" viewBox="0 0 16 16"><use href="#splat"/></svg><span class="n" style="font-size:13.35px">Cover.jpg</span><svg class="fo" viewBox="0 0 16 14"><use href="#fold"/></svg><span class="p" style="font-size:13.58px">D:\Downloads\[ Music ]\¤ The Kilima...</span><span class="g">9</span></div>
<div class="row" style="top:405px"><i class="cb"></i><svg class="icr" viewBox="0 0 16 16"><use href="#splat"/></svg><span class="n" style="font-size:13.35px">Cover.jpg</span><svg class="fo" viewBox="0 0 16 14"><use href="#fold"/></svg><span class="p" style="font-size:13.58px">D:\Downloads\[ Music ]\¤ The Kilima...</span><span class="g">10</span></div>
<div class="row" style="top:426px"><i class="cb"></i><svg class="icr" viewBox="0 0 16 16"><use href="#splat"/></svg><span class="n" style="font-size:13.35px">Cover.jpg</span><svg class="fo" viewBox="0 0 16 14"><use href="#fold"/></svg><span class="p" style="font-size:13.58px">D:\Downloads\[ Music ]\¤ The Kilima...</span><span class="g">10</span></div>
<div class="row h" style="top:447px"><i class="cb"></i><svg class="icr" viewBox="0 0 16 16"><use href="#splat"/></svg><span class="n" style="font-size:13.35px">Cover.jpg</span><svg class="fo" viewBox="0 0 16 14"><use href="#fold"/></svg><span class="p" style="font-size:13.58px">D:\Downloads\[ Music ]\¤ The Kilima...</span><span class="g">11</span></div>
<div class="row h" style="top:468px"><i class="cb"></i><svg class="icr" viewBox="0 0 16 16"><use href="#splat"/></svg><span class="n" style="font-size:13.35px">Cover.jpg</span><svg class="fo" viewBox="0 0 16 14"><use href="#fold"/></svg><span class="p" style="font-size:13.58px">D:\Downloads\[ Music ]\¤ The Kilima...</span><span class="g">11</span></div>
<div class="lh" style="left:6px">Fájl neve</div>
<div class="sep" style="left:239px"></div>
<div class="lh" style="left:246px">Mappa</div>
<div class="sep" style="left:499px"></div>
<div class="lh" style="left:506px;font-size:12.6px">Csoport</div>
<div class="sb" style="left:543px;top:0;width:17px;height:503px"></div>
<div class="th" style="left:544px;top:17px;width:15px;height:35px"></div>
<div class="sb" style="left:0;top:486px;width:543px;height:17px"></div>
<div class="th" style="left:17px;top:487px;width:199px;height:15px"></div>
<svg class="a" style="left:543px;top:0" width="17" height="17" viewBox="0 0 17 17"><path d="M5.1 10.5 L8.5 7.1 L11.9 10.5" fill="none" stroke="#606060" stroke-width="2"/></svg>
<svg class="a" style="left:543px;top:470px" width="17" height="17" viewBox="0 0 17 17"><path d="M5.1 6.5 L8.5 9.9 L11.9 6.5" fill="none" stroke="#606060" stroke-width="2"/></svg>
<svg class="a" style="left:0;top:486px" width="17" height="17" viewBox="0 0 17 17"><path d="M10 5.1 L6.6 8.5 L10 11.9" fill="none" stroke="#606060" stroke-width="2"/></svg>
<svg class="a" style="left:526px;top:486px" width="17" height="17" viewBox="0 0 17 17"><path d="M7 5.1 L10.4 8.5 L7 11.9" fill="none" stroke="#606060" stroke-width="2"/></svg>

</div><!--endlist-->

<div class="sb" style="left:416px;top:272px;width:16px;height:467px"></div>
<div class="th" style="left:416px;top:289px;width:15px;height:317px"></div>
<svg class="a" style="left:416px;top:272px" width="16" height="17" viewBox="0 0 16 17"><path d="M4.6 11 L8 7.6 L11.4 11" fill="none" stroke="#606060" stroke-width="2"/></svg>
<svg class="a" style="left:416px;top:722px" width="16" height="17" viewBox="0 0 16 17"><path d="M4.6 6 L8 9.4 L11.4 6" fill="none" stroke="#606060" stroke-width="2"/></svg>
<div id="status"></div>
<svg class="a" style="left:996px;top:759px" width="12" height="12" viewBox="0 0 12 12" fill="#999">
<rect x="8" y="0" width="2" height="2"/><rect x="4" y="4" width="2" height="2"/><rect x="8" y="4" width="2" height="2"/>
<rect x="0" y="8" width="2" height="2"/><rect x="4" y="8" width="2" height="2"/><rect x="8" y="8" width="2" height="2"/>
</svg>
<div class="t" style="left:10px;top:757px;font-size:11.5px">Kész.</div>
<div class="t" style="left:63px;top:757px;font-size:11.5px;color:#808080">275 fájl látható</div>
</body></html>
